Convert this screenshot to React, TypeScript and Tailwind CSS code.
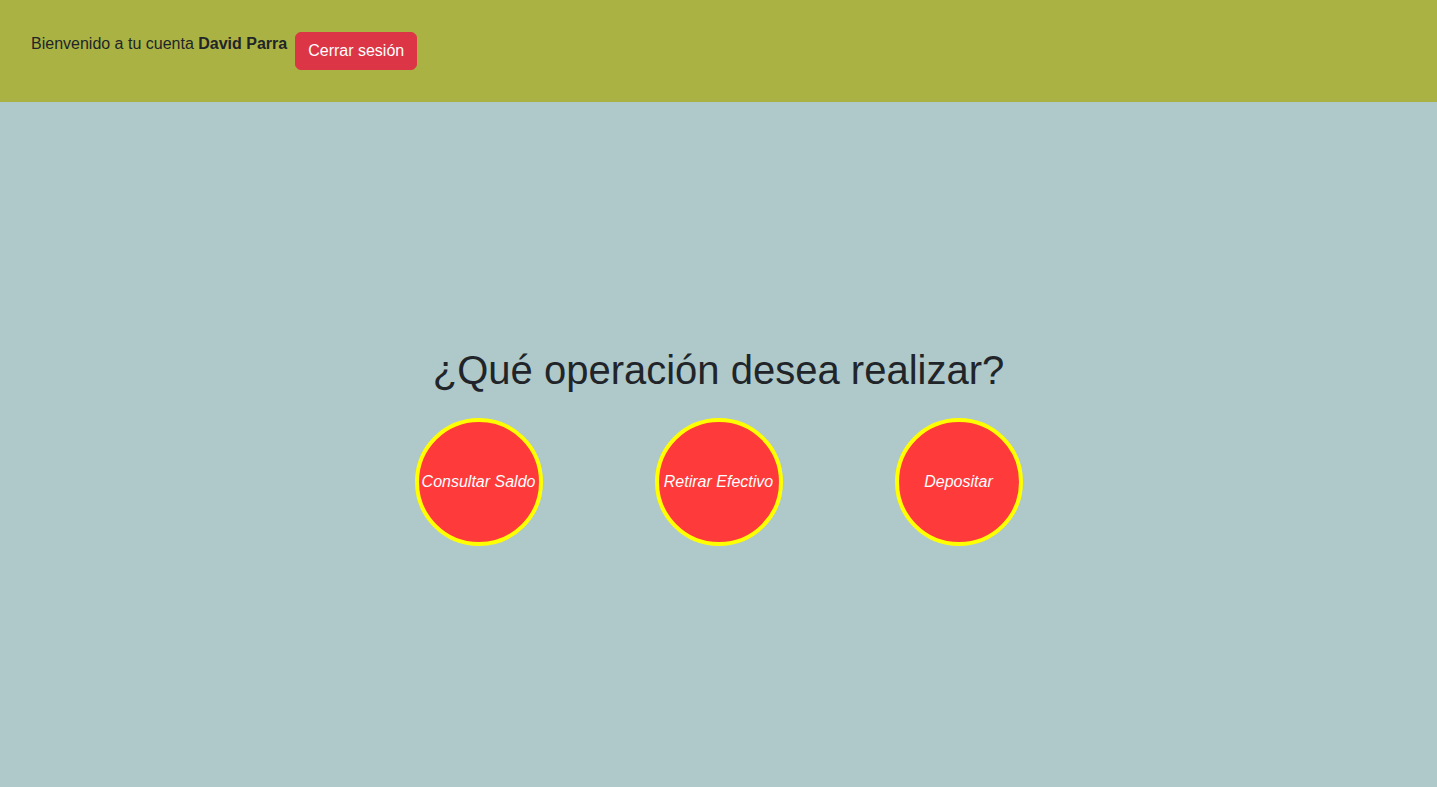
const operations = ["Consultar Saldo", "Retirar Efectivo", "Depositar"];

export default function App() {
  return (
    <div className="flex min-h-screen flex-col bg-[#afc9ca] font-['Liberation_Sans',Arial,sans-serif] text-base text-[#212529]">
      <header className="flex items-start gap-2 bg-[#aab243] px-[31px] py-8">
        <p>
          Bienvenido a tu cuenta <strong>David Parra</strong>
        </p>
        <button
          type="button"
          className="rounded-md border border-[#dc3545] bg-[#dc3545] px-3 py-1.5 text-white"
        >
          Cerrar sesión
        </button>
      </header>
      <main className="flex flex-1 flex-col items-center justify-center gap-6 pt-0.5">
        <h1 className="text-[40px] leading-[48px]">¿Qué operación desea realizar?</h1>
        <div className="flex gap-28">
          {operations.map((name) => (
            <button
              key={name}
              type="button"
              className="size-32 rounded-full border-4 border-[#ffff00] bg-[#ff3a3a] whitespace-nowrap text-white italic"
            >
              {name}
            </button>
          ))}
        </div>
      </main>
    </div>
  );
}
